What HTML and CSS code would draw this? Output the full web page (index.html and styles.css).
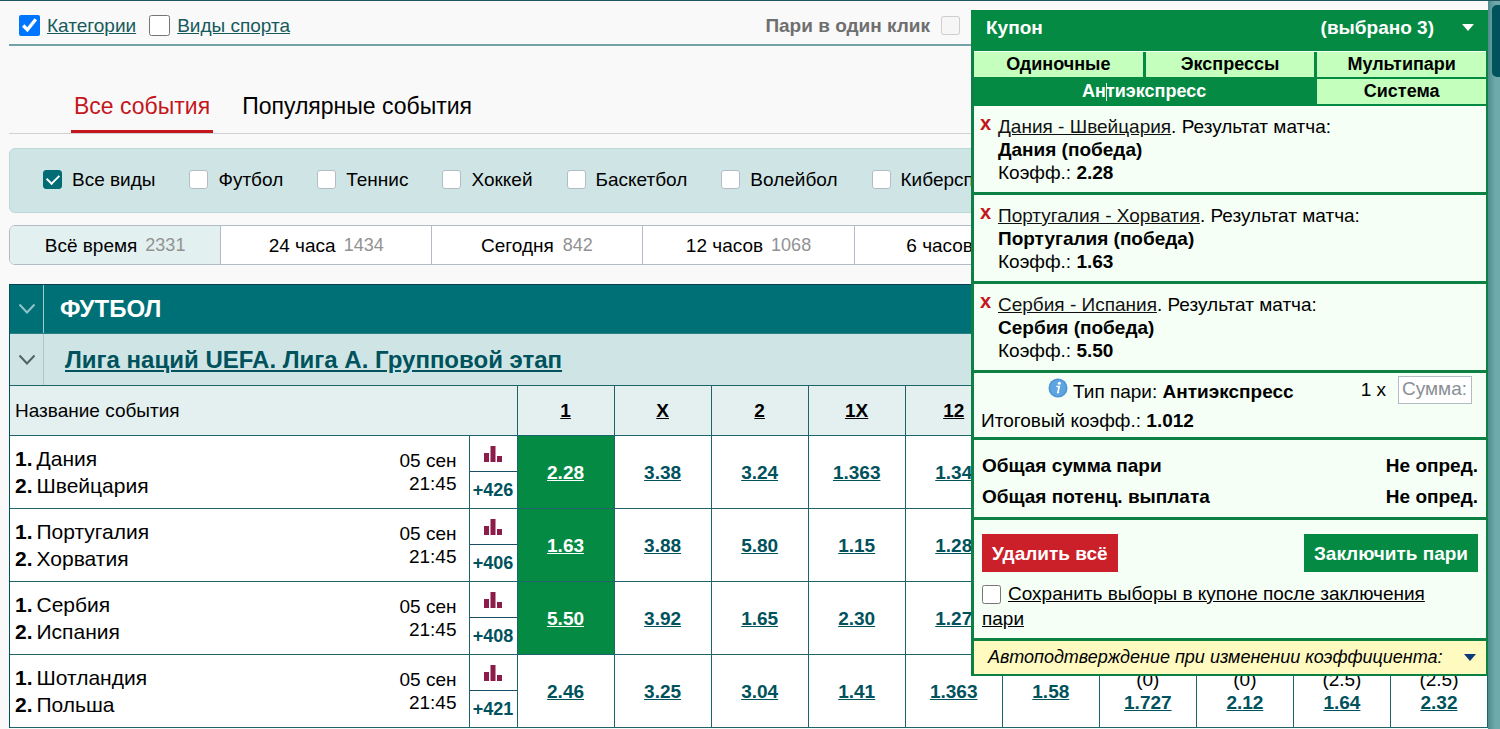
FILE: index.html
```html
<!DOCTYPE html>
<html lang="ru">
<head>
<meta charset="utf-8">
<title>Все события</title>
<link rel="stylesheet" href="styles.css">
</head>
<body>
<div class="page">
  <main class="content">
    <div class="topbar">
      <label class="view-toggle"><input type="checkbox" checked><span>Категории</span></label>
      <label class="view-toggle"><input type="checkbox"><span>Виды спорта</span></label>
      <label class="one-click">Пари в один клик <input type="checkbox" disabled></label>
    </div>

    <nav class="tabs">
      <a class="tab tab-active" href="#all">Все события</a>
      <a class="tab" href="#popular">Популярные события</a>
    </nav>

    <div class="sports">
      <label class="sport"><input type="checkbox" checked>Все виды</label>
      <label class="sport"><input type="checkbox">Футбол</label>
      <label class="sport"><input type="checkbox">Теннис</label>
      <label class="sport"><input type="checkbox">Хоккей</label>
      <label class="sport"><input type="checkbox">Баскетбол</label>
      <label class="sport"><input type="checkbox">Волейбол</label>
      <label class="sport"><input type="checkbox">Киберспорт</label>
    </div>

    <div class="periods">
      <button class="period period-active">Всё время<span class="count">2331</span></button>
      <button class="period">24 часа<span class="count">1434</span></button>
      <button class="period">Сегодня<span class="count">842</span></button>
      <button class="period">12 часов<span class="count">1068</span></button>
      <button class="period">6 часов<span class="count"></span></button>
      <div class="period"></div>
      <div class="period"></div>
    </div>

    <section class="league-block">
      <div class="sport-row">
        <button class="fold" aria-label="Свернуть"><svg width="18" height="12" viewBox="0 0 18 12"><path d="M1.500 1.500L9 9.500L16.500 1.500" fill="none" stroke="#8fc4c8" stroke-width="2"/></svg></button>
        <h2>ФУТБОЛ</h2>
      </div>
      <div class="league-row">
        <button class="fold" aria-label="Свернуть"><svg width="18" height="12" viewBox="0 0 18 12"><path d="M1.500 1.500L9 9.500L16.500 1.500" fill="none" stroke="#4f6367" stroke-width="2"/></svg></button>
        <a href="#league">Лига наций UEFA. Лига А. Групповой этап</a>
      </div>
      <table class="odds">
        <colgroup><col class="col-name"><col class="col-more"><col span="10"></colgroup>
        <thead>
          <tr><th colspan="2" class="name-head">Название события</th><th><a href="#o">1</a></th><th><a href="#o">X</a></th><th><a href="#o">2</a></th><th><a href="#o">1X</a></th><th><a href="#o">12</a></th><th></th><th></th><th></th><th></th><th></th></tr>
        </thead>
        <tbody>
          <tr>
            <td><div class="event"><div class="teams"><div><b>1.</b>Дания</div><div><b>2.</b>Швейцария</div></div><div class="date">05 сен<br>21:45</div></div></td>
            <td class="more"><a class="stat" href="#s" aria-label="Статистика"><svg width="18" height="16" viewBox="0 0 18 16"><path fill="#8c1d4b" d="M0 7h5v9H0zM6.500 0h5v16h-5zM13 10h5v6h-5z"/></svg></a><a class="plus" href="#m">+426</a></td>
            <td class="picked"><a href="#o">2.28</a></td><td><a href="#o">3.38</a></td><td><a href="#o">3.24</a></td><td><a href="#o">1.363</a></td><td><a href="#o">1.34</a></td><td></td><td></td><td></td><td></td><td></td>
          </tr>
          <tr>
            <td><div class="event"><div class="teams"><div><b>1.</b>Португалия</div><div><b>2.</b>Хорватия</div></div><div class="date">05 сен<br>21:45</div></div></td>
            <td class="more"><a class="stat" href="#s" aria-label="Статистика"><svg width="18" height="16" viewBox="0 0 18 16"><path fill="#8c1d4b" d="M0 7h5v9H0zM6.500 0h5v16h-5zM13 10h5v6h-5z"/></svg></a><a class="plus" href="#m">+406</a></td>
            <td class="picked"><a href="#o">1.63</a></td><td><a href="#o">3.88</a></td><td><a href="#o">5.80</a></td><td><a href="#o">1.15</a></td><td><a href="#o">1.28</a></td><td></td><td></td><td></td><td></td><td></td>
          </tr>
          <tr>
            <td><div class="event"><div class="teams"><div><b>1.</b>Сербия</div><div><b>2.</b>Испания</div></div><div class="date">05 сен<br>21:45</div></div></td>
            <td class="more"><a class="stat" href="#s" aria-label="Статистика"><svg width="18" height="16" viewBox="0 0 18 16"><path fill="#8c1d4b" d="M0 7h5v9H0zM6.500 0h5v16h-5zM13 10h5v6h-5z"/></svg></a><a class="plus" href="#m">+408</a></td>
            <td class="picked"><a href="#o">5.50</a></td><td><a href="#o">3.92</a></td><td><a href="#o">1.65</a></td><td><a href="#o">2.30</a></td><td><a href="#o">1.27</a></td><td></td><td></td><td></td><td></td><td></td>
          </tr>
          <tr>
            <td><div class="event"><div class="teams"><div><b>1.</b>Шотландия</div><div><b>2.</b>Польша</div></div><div class="date">05 сен<br>21:45</div></div></td>
            <td class="more"><a class="stat" href="#s" aria-label="Статистика"><svg width="18" height="16" viewBox="0 0 18 16"><path fill="#8c1d4b" d="M0 7h5v9H0zM6.500 0h5v16h-5zM13 10h5v6h-5z"/></svg></a><a class="plus" href="#m">+421</a></td>
            <td><a href="#o">2.46</a></td><td><a href="#o">3.25</a></td><td><a href="#o">3.04</a></td><td><a href="#o">1.41</a></td><td><a href="#o">1.363</a></td><td><a href="#o">1.58</a></td><td>(0)<br><a href="#o">1.727</a></td><td>(0)<br><a href="#o">2.12</a></td><td>(2.5)<br><a href="#o">1.64</a></td><td>(2.5)<br><a href="#o">2.32</a></td>
          </tr>
        </tbody>
      </table>
    </section>
  </main>

  <div class="scrollbar"><div class="thumb"></div></div>

  <aside class="coupon">
    <header class="coupon-head"><span>Купон</span><span class="selected">(выбрано 3)</span><svg width="12" height="7" viewBox="0 0 12 7"><path fill="#fff" d="M0 0h12L6 7z"/></svg></header>
    <div class="types">
      <button>Одиночные</button>
      <button>Экспрессы</button>
      <button>Мультипари</button>
      <button class="type-active">Ан<i class="caret"></i>тиэкспресс</button>
      <button>Система</button>
    </div>
    <div class="pick"><button class="remove">x</button><div><a href="#e">Дания - Швейцария</a>. Результат матча:<br><b>Дания (победа)</b><br>Коэфф.: <b>2.28</b></div></div>
    <div class="pick"><button class="remove">x</button><div><a href="#e">Португалия - Хорватия</a>. Результат матча:<br><b>Португалия (победа)</b><br>Коэфф.: <b>1.63</b></div></div>
    <div class="pick"><button class="remove">x</button><div><a href="#e">Сербия - Испания</a>. Результат матча:<br><b>Сербия (победа)</b><br>Коэфф.: <b>5.50</b></div></div>
    <div class="bet">
      <div class="bet-row">
        <svg class="info" width="20" height="20" viewBox="0 0 20 20"><circle cx="10" cy="10" r="9.500" fill="#4b93d6"/><circle cx="10" cy="10" r="8" fill="#5fa4e2"/><circle cx="11.300" cy="5.300" r="1.500" fill="#fff"/><path d="M8.300 8.500h3l-1.500 6h1.300" fill="none" stroke="#fff" stroke-width="1.600"/></svg>
        <span class="bet-type">Тип пари: <b>Антиэкспресс</b></span>
        <label for="sum">1 x</label><input id="sum" class="sum" type="text" placeholder="Сумма:">
      </div>
      <div class="total-odds">Итоговый коэфф.: <b>1.012</b></div>
    </div>
    <div class="totals">
      <div><span>Общая сумма пари</span><span>Не опред.</span></div>
      <div><span>Общая потенц. выплата</span><span>Не опред.</span></div>
    </div>
    <div class="actions">
      <div class="buttons"><button class="clear">Удалить всё</button><button class="place">Заключить пари</button></div>
      <label class="keep"><input type="checkbox"><span>Сохранить выборы в купоне после заключения пари</span></label>
    </div>
    <div class="auto"><span>Автоподтверждение при изменении коэффициента:</span><svg width="12" height="7" viewBox="0 0 12 7"><path fill="#0b3a78" d="M0 0h12L6 7z"/></svg></div>
  </aside>
</div>
</body>
</html>
```
FILE: styles.css
```css
* { box-sizing: border-box; }
body {
  margin: 0;
  background: #f9f9f9;
  color: #000;
  font: 19px/23px "Liberation Sans", Arial, sans-serif;
}
button, input { font: inherit; color: inherit; }
button { margin: 0; padding: 0; border: 0; background: none; }
input[type="checkbox"] { margin: 0; flex: none; }

.page {
  position: relative;
  display: flex;
  min-height: 100vh;
  border-top: 1px solid #1f5560;
}
.content { flex: 1; min-width: 0; padding-left: 9px; }
.scrollbar { width: 12px; padding: 4px 0 0 4px; background: linear-gradient(90deg, #4f8b8e, #6fa9ab 60%); }
.thumb { height: 72px; border-radius: 5px 0 0 5px; background: #00525c; }

.topbar {
  display: flex;
  align-items: center;
  gap: 13px;
  height: 45px;
  padding: 5px 528px 0 10px;
  border-bottom: 2px solid #74a2a8;
}
.view-toggle { display: flex; align-items: center; gap: 7px; color: #17595d; text-decoration: underline; }
.view-toggle input { width: 21px; height: 21px; }
.one-click { display: flex; align-items: center; gap: 11px; margin-left: auto; color: #6f6f6f; font-weight: bold; }
.one-click input { width: 19px; height: 19px; }

.tabs { display: flex; gap: 26px; height: 88px; padding: 0 62px; align-items: flex-end; border-bottom: 1px solid #d2d2d2; }
.tab { height: 44px; padding: 3px 3px 0; color: #000; font-size: 23px; line-height: 28px; text-decoration: none; }
.tab-active { color: #c4161c; border-bottom: 3px solid #c4161c; }

.sports {
  display: flex;
  align-items: center;
  gap: 34px;
  height: 65px;
  margin-top: 14px;
  padding: 0 0 2px 33px;
  border: 1px solid #bcd8d9;
  border-radius: 6px;
  background: #cfe5e5;
}
.sport { display: flex; align-items: center; gap: 10px; }
.sport input {
  display: grid;
  place-items: center;
  width: 19px;
  height: 19px;
  appearance: none;
  border: 1px solid #b3bcc6;
  border-radius: 3px;
  background: #fff;
}
.sport input:checked { border-color: #006d75; background: #006d75; }
.sport input:checked::before {
  content: "";
  width: 10px;
  height: 6px;
  margin-bottom: 3px;
  border: solid #fff;
  border-width: 0 0 2px 2px;
  transform: rotate(-45deg);
}

.periods { display: flex; height: 40px; margin-top: 12px; border: 1px solid #b3bcc6; border-radius: 6px; background: #fff; overflow: hidden; }
.period { display: flex; flex: 1; align-items: center; justify-content: center; gap: 8px; border-right: 1px solid #b3bcc6; }
.period:last-child { border-right: 0; }
.period-active { background: #e2f0f0; }
.count { min-width: 32px; color: #929292; font-size: 18px; }

.league-block { margin-top: 19px; border-left: 1px solid #00525c; }
.sport-row, .league-row { display: flex; align-items: center; }
.sport-row { height: 49px; border-top: 1px solid #0b4152; background: #007077; color: #fff; }
.league-row { height: 52px; border-top: 1px solid #2d7f86; background: #cfe5e5; }
.fold { display: flex; align-items: center; justify-content: center; align-self: stretch; width: 34px; border-right: 1px solid #a6cbcf; }
.sport-row h2 { margin: 0 0 0 16px; font-size: 24px; line-height: 30px; }
.league-row a { margin-left: 21px; color: #00525c; font-size: 24px; font-weight: bold; line-height: 30px; }

.odds { width: 100%; table-layout: fixed; border-collapse: collapse; background: #fff; }
.col-name { width: 459px; }
.col-more { width: 48px; }
.odds th, .odds td { padding: 0; border: 1px solid #1d646b; text-align: center; }
.odds tr > :first-child { border-left: 0; }
.odds th { height: 50px; background: #e4f0f0; }
.odds .name-head { padding-left: 5px; font-weight: normal; text-align: left; }
.odds td { height: 73px; }
.odds th a { color: #000; }
.odds td a { color: #00525c; font-weight: bold; }
.odds .picked { background: #058a43; }
.odds .picked a { color: #fff; }
.event { display: flex; align-items: center; justify-content: space-between; padding: 0 12px 0 5px; text-align: left; }
.teams { font-size: 21px; line-height: 27px; }
.teams b { margin-right: 4px; }
.date { text-align: right; }
.stat { display: flex; align-items: center; justify-content: center; height: 35px; border-bottom: 1px solid #1d4f6b; }
.odds .plus { display: block; font-size: 18px; line-height: 36px; text-decoration: none; }

.coupon {
  position: absolute;
  top: 9px;
  right: 12px;
  width: 517px;
  border: solid #0d8044;
  border-width: 0 2px 2px 3px;
  background: #f5fff5;
}
.coupon-head {
  display: flex;
  align-items: center;
  height: 41px;
  margin: 0 -2px 1px -3px;
  padding: 0 14px 7px 15px;
  background: #058a43;
  color: #fff;
  font-weight: bold;
}
.selected { margin-left: auto; margin-right: 28px; }
.types { display: grid; grid-template-columns: repeat(3, 1fr); gap: 2px 3px; padding-bottom: 2px; background: #058a43; font-size: 18px; }
.types button { height: 25px; padding-bottom: 1px; background: #c5ffbe; font-weight: bold; }
.types .type-active { grid-column: span 2; background: #058a43; color: #fff; }
.caret { position: relative; }
.caret::before { content: ""; position: absolute; top: 2px; left: 0; width: 1px; height: 18px; background: #e8f5ec; }
.pick, .bet, .totals, .actions { border-bottom: 3px solid #0d8044; }
.pick { display: flex; gap: 7px; padding: 9px 6px 8px; }
.pick a { color: #111; }
.remove { align-self: flex-start; width: 11px; color: #c4161c; font-size: 20px; font-weight: bold; line-height: 16px; }
.bet { padding: 3px 14px 4px 7px; }
.bet-row { display: flex; align-items: center; height: 28px; }
.info { margin: 0 5px 4px 67px; }
.bet-type { margin-right: auto; padding-top: 2px; }
.bet-row label { margin-right: 12px; padding-bottom: 2px; }
.sum { width: 74px; height: 28px; padding: 0 3px 2px; border: 1px solid #b3bcc6; background: #fff; }
.sum::placeholder { color: #8a8f96; opacity: 1; }
.total-odds { padding-top: 5px; line-height: 24px; }
.totals { padding: 10px 8px 5px; font-weight: bold; line-height: 31px; }
.totals div { display: flex; justify-content: space-between; }
.actions { padding: 14px 8px 7px; line-height: 25px; }
.buttons { display: flex; justify-content: space-between; margin-bottom: 9px; }
.buttons button { height: 38px; padding: 0 10px; color: #fff; font-weight: bold; }
.clear { background: #cb2029; }
.place { background: #058a43; }
.keep { display: block; padding-right: 20px; }
.keep input { width: 19px; height: 19px; margin-right: 7px; vertical-align: middle; }
.keep span { text-decoration: underline; }
.auto { display: flex; align-items: center; justify-content: space-between; height: 33px; padding: 0 10px 0 14px; background: #fffac0; font-size: 18px; font-style: italic; }
```
